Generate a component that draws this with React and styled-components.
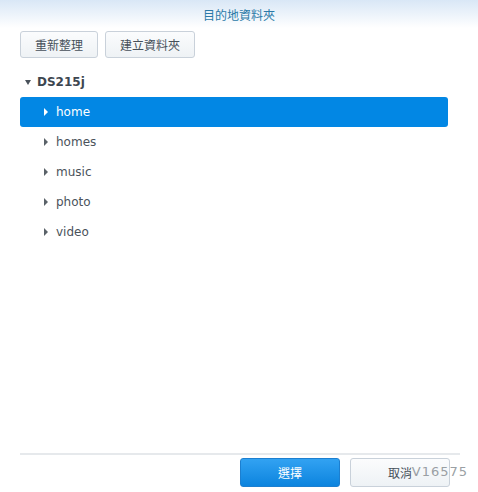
import styled, { createGlobalStyle } from "styled-components";

const GlobalStyle = createGlobalStyle`
  html, body {
    margin: 0;
    padding: 0;
    background: #fff;
  }
  body {
    font-family: "DejaVu Sans", "Noto Sans CJK TC", sans-serif;
  }
`;

const Window = styled.div`
  width: 478px;
  height: 492px;
  display: flex;
  flex-direction: column;
  background: #fff;
  overflow: hidden;
`;

const Header = styled.div`
  height: 28px;
  display: flex;
  align-items: center;
  justify-content: center;
  background: linear-gradient(#d9e7f6, #ffffff);
  color: #2b7aa8;
  font-size: 12px;
  font-family: "Noto Sans CJK TC", sans-serif;
`;

const Toolbar = styled.div`
  display: flex;
  gap: 7px;
  padding: 3px 20px 0;
`;

const ToolButton = styled.button`
  height: 27px;
  padding: 0 14px;
  border: 1px solid #c9d1da;
  border-radius: 3px;
  background: linear-gradient(#fbfcfd, #eef2f5);
  color: #46505a;
  font-size: 12px;
  font-family: "Noto Sans CJK TC", sans-serif;
`;

const Tree = styled.div`
  flex: 1;
  padding: 9px 30px 0 20px;
  display: flex;
  flex-direction: column;
`;

const Row = styled.div`
  height: 30px;
  display: flex;
  align-items: center;
  gap: 8px;
  padding-left: ${(p) => (p.root ? "5px" : "24px")};
  border-radius: 3px;
  font-size: 12px;
  font-weight: ${(p) => (p.root ? "bold" : "normal")};
  color: ${(p) => (p.selected ? "#ffffff" : p.root ? "#3d4650" : "#4a525b")};
  background: ${(p) => (p.selected ? "#0287e4" : "transparent")};
`;

const Caret = styled.span`
  width: 0;
  height: 0;
  ${(p) =>
    p.open
      ? `border-left: 3.5px solid transparent;
         border-right: 3.5px solid transparent;
         border-top: 5px solid #4a525b;
         margin-right: -2px;`
      : `border-top: 4px solid transparent;
         border-bottom: 4px solid transparent;
         border-left: 4px solid ${p.light ? "#ffffff" : "#5a6269"};`}
`;

const Footer = styled.div`
  margin: 0 18px 5px 20px;
  border-top: 2px solid #e6e9ec;
  padding: 3px 10px 0 0;
  display: flex;
  justify-content: flex-end;
  gap: 10px;
  position: relative;
`;

const DialogButton = styled.button`
  width: 100px;
  height: 29px;
  border-radius: 3px;
  font-size: 12px;
  font-family: "Noto Sans CJK TC", sans-serif;
  border: 1px solid ${(p) => (p.primary ? "#1c7fd0" : "#c9d1da")};
  background: ${(p) =>
    p.primary
      ? "linear-gradient(#32a2f2, #0c84de)"
      : "linear-gradient(#fbfcfd, #eef2f5)"};
  color: ${(p) => (p.primary ? "#ffffff" : "#46505a")};
`;

const Watermark = styled.span`
  position: absolute;
  right: -8px;
  top: 9px;
  font-size: 13px;
  color: #9a9fa4;
  font-family: "DejaVu Sans", sans-serif;
  letter-spacing: 1px;
`;

const folders = ["home", "homes", "music", "photo", "video"];

export default function App() {
  return (
    <>
      <GlobalStyle />
      <Window>
        <Header>目的地資料夾</Header>
        <Toolbar>
          <ToolButton>重新整理</ToolButton>
          <ToolButton>建立資料夾</ToolButton>
        </Toolbar>
        <Tree>
          <Row root>
            <Caret open />
            DS215j
          </Row>
          {folders.map((f, i) => (
            <Row key={f} selected={i === 0}>
              <Caret light={i === 0} />
              {f}
            </Row>
          ))}
        </Tree>
        <Footer>
          <DialogButton primary>選擇</DialogButton>
          <DialogButton>取消</DialogButton>
          <Watermark>V16575</Watermark>
        </Footer>
      </Window>
    </>
  );
}
